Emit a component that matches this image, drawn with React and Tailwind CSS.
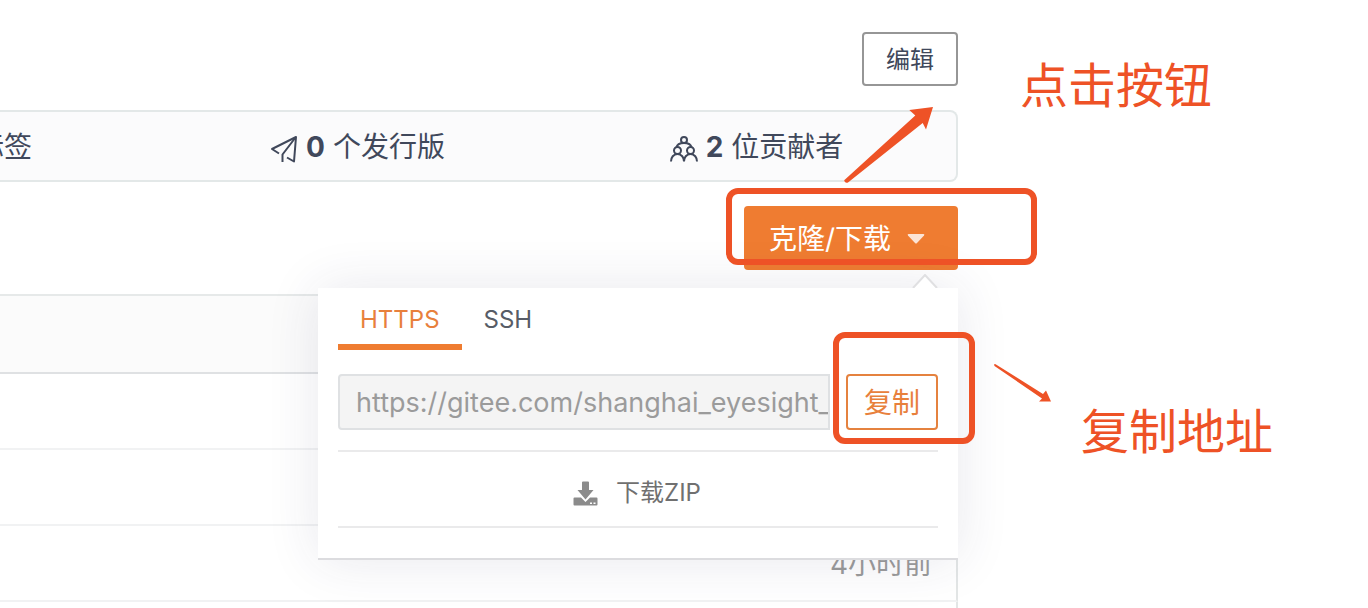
import { useState } from 'react'

const rows = ['', '', '4小时前', '']

function TagIcon() {
  return (
    <svg viewBox="0 0 28 28" className="w-7 h-7 mt-1" fill="none" stroke="currentColor" strokeWidth="2">
      <path d="M3 4h10l12 12-9 9L3 13z" />
      <circle cx="9" cy="10" r="2" />
    </svg>
  )
}

function PlaneIcon() {
  return (
    <svg viewBox="0 0 28 28" className="w-7 h-7 mt-1" fill="none" stroke="currentColor" strokeWidth="2" strokeLinejoin="round">
      <path d="M9 18.500 2 14 26 2l-2 24.500-7-4" />
      <path d="M12.500 27v-7.500L25.500 2.500" />
    </svg>
  )
}

function PeopleIcon() {
  return (
    <svg viewBox="0 0 28 28" className="w-7 h-7 mt-1" fill="none" stroke="currentColor" strokeWidth="2">
      <circle cx="14" cy="5" r="3" />
      <circle cx="7.500" cy="15.500" r="3.500" />
      <circle cx="20.500" cy="15.500" r="3.500" />
      <path d="M6.500 12.500C7 9.500 10 8 14 8s7 1.500 7.500 4.500" />
      <path d="M1 26.500c0-4 2.500-7.500 6.500-7.500s6.500 3.500 6.500 7.500c0-4 2.500-7.500 6.500-7.500s6.500 3.500 6.500 7.500" />
    </svg>
  )
}

function DownloadIcon() {
  return (
    <svg viewBox="0 0 25 25" className="w-[25px] h-[25px]" fill="currentColor">
      <path d="M9 1.500q0-1 1-1h5q1 0 1 1V9h4.500L12.500 18.500 4.500 9H9z" />
      <path d="M1.500 16.500H8l4.500 4.500 4.500-4.500h6.500q1 0 1 1v6q0 1-1 1h-22q-1 0-1-1v-6q0-1 1-1z" />
      <path d="M17 21.500h2v1.500h-2zM20.500 21.500h2v1.500h-2z" fill="#fff" />
    </svg>
  )
}

const stats = [
  { icon: <TagIcon />, count: 0, label: '个标签' },
  { icon: <PlaneIcon />, count: 0, label: '个发行版' },
  { icon: <PeopleIcon />, count: 2, label: '位贡献者' },
]

function ClonePanel() {
  const [tab, setTab] = useState('HTTPS')
  return (
    <div className="absolute right-0 top-[82px] z-10 w-[640px] px-5 pb-[30px] bg-white border-b-2 border-[#dcdcdf] shadow-[0_0_50px_rgba(45,45,90,0.11)]">
      <svg viewBox="0 0 26 14" className="absolute right-5 -top-[14px] w-[26px] h-[14px]">
        <path d="M1 14 13 1l12 13" fill="#fff" stroke="#e0e0e2" strokeWidth="2" />
      </svg>
      <div className="flex">
        {['HTTPS', 'SSH'].map((name) => (
          <button
            key={name}
            onClick={() => setTab(name)}
            className={`h-[62px] px-[22px] pt-2 border-b-6 text-2xl ${tab === name ? 'border-[#ef7c31] text-[#e8803c]' : 'border-transparent text-[#575c66]'}`}
          >
            {name}
          </button>
        ))}
      </div>
      <div className="flex gap-4 mt-6">
        <input
          readOnly
          aria-label="仓库地址"
          defaultValue="https://gitee.com/shanghai_eyesight_"
          className="flex-1 min-w-0 h-14 pl-4 bg-[#f4f4f4] border-2 border-[#dfe1e3] rounded-l text-[27px] text-[#9b9b9b] outline-none"
        />
        <div className="relative">
          <button className="w-[92px] h-14 pt-0.5 border-2 border-[#e5823f] rounded text-[28px] text-[#e8803c]">复制</button>
          <div className="absolute -left-[13px] -top-[42px] w-[142px] h-28 border-6 border-[#ee5226] rounded-xl pointer-events-none" />
        </div>
      </div>
      <button className="flex items-center justify-center gap-4.5 w-full h-[78px] mt-5 pt-2 pr-0.5 border-y-2 border-[#eaeaeb] text-2xl text-[#707070]">
        <span className="text-[#8b8b8b]"><DownloadIcon /></span>
        下载ZIP
      </button>
    </div>
  )
}

export default function App() {
  return (
    <div className="flex h-screen overflow-hidden bg-white text-[#40485b] font-[Inter,'Noto_Sans_CJK_SC',sans-serif]">
      <main className="flex-1 min-w-0 pt-8">
        <div className="flex justify-end">
          <button className="w-24 h-[54px] pt-0.5 border-2 border-[#969696] rounded text-2xl">编辑</button>
        </div>

        <ul className="flex justify-end h-[72px] pt-0.5 mt-6 overflow-hidden bg-[#fbfbfc] border-y-2 border-r-2 border-[#e3e8e8] rounded-r-lg text-[28px]">
          {stats.map((s) => (
            <li key={s.label} className="flex items-center justify-center gap-2 w-[399px] shrink-0">
              {s.icon}
              <b className="font-bold">{s.count}</b>
              <span>{s.label}</span>
            </li>
          ))}
        </ul>

        <div className="flex justify-end mt-6">
          <div className="relative">
            <button className="flex items-center justify-center gap-4 w-[214px] h-16 pt-0.5 pr-2 bg-[#ef7c31] rounded text-[28px] text-white">
              克隆/下载
              <svg viewBox="0 0 18 10" className="w-[18px] h-[10px]" fill="#fce4d6">
                <path d="M1.500 0h15q1.500 0 .5 1.500L10 9q-1 1-2 0L1 1.500Q0 0 1.500 0z" />
              </svg>
            </button>
            <ClonePanel />
            <div className="absolute -left-[18px] -top-[18px] w-[311px] h-[77px] z-20 border-6 border-[#ee5226] rounded-xl pointer-events-none" />
            <svg viewBox="0 0 90 78" className="absolute right-6 -top-[100px] w-[90px] h-[78px]" fill="#ee5226">
              <path d="M89 1 82 23.500l-3.300-6.500L4 76.500Q2 77.500.8 75.800T1 73.500L71.300 9.500 65.300 4z" />
            </svg>
          </div>
        </div>

        <table className="w-full mt-6 border-separate border-spacing-0 text-[28px] text-[#9b9b9b]">
          <thead>
            <tr>
              <th className="h-20 bg-[#fbfbfb] border-y-2 border-r-2 border-t-[#e6e9e9] border-b-[#dfe1e3] border-r-[#e3e6e6]" />
            </tr>
          </thead>
          <tbody>
            {rows.map((time, i) => (
              <tr key={i}>
                <td className="h-[76px] pt-0.5 pr-6 text-right border-b-2 border-r-2 border-b-[#f1f2f3] border-r-[#e3e6e6]">{time}</td>
              </tr>
            ))}
          </tbody>
        </table>
      </main>

      <aside className="w-[410px] pt-[62px] text-5xl leading-[48px] text-[#ee5226]">
        <p className="ml-[62px]">点击按钮</p>
        <svg viewBox="0 0 57 38" className="w-[57px] h-[38px] ml-9 mt-[254px]" fill="currentColor">
          <path d="M0 .5Q1-.5 2 .5L49 30l3-3.500 5 11H45l3-3L.5 2z" />
        </svg>
        <p className="ml-[123px] mt-1.5">复制地址</p>
      </aside>
    </div>
  )
}
